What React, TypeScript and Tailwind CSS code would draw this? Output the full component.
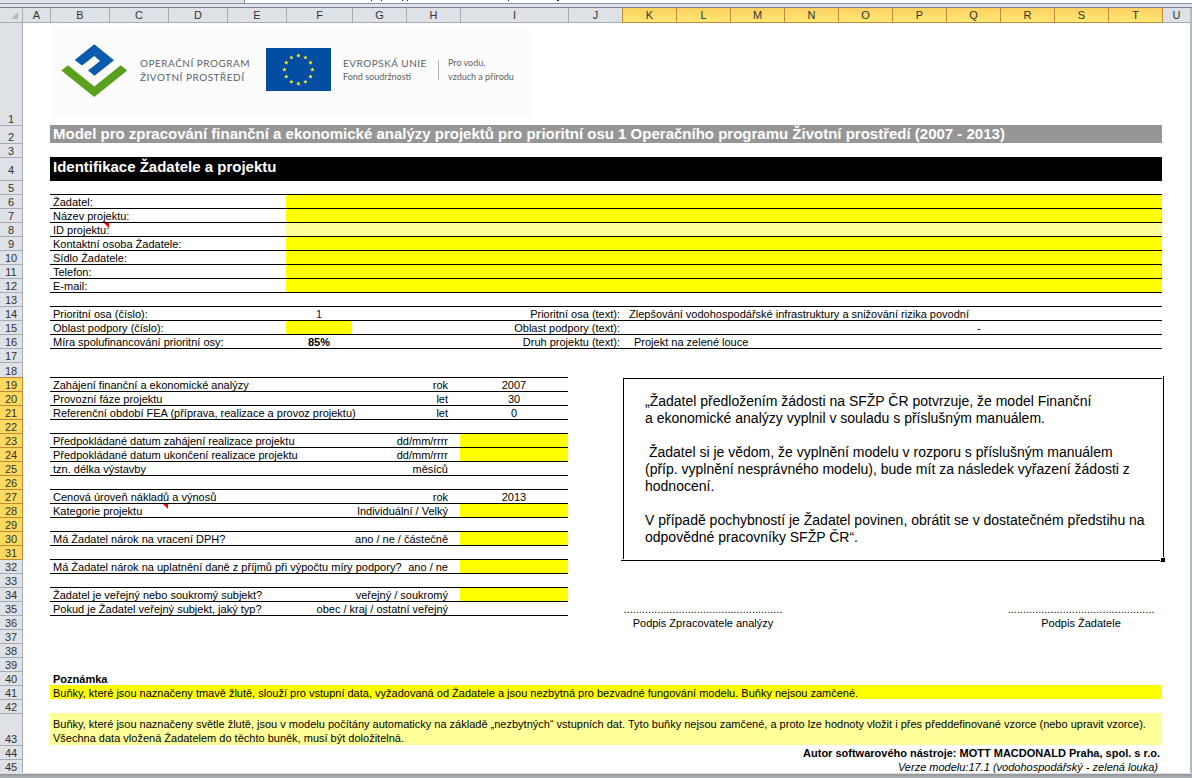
import type { ReactNode } from "react";

const COLUMN_WIDTHS = [
  "w-[23px]", "w-[27px]", "w-[59px]", "w-[59px]", "w-[59px]", "w-[59px]", "w-[66px]",
  "w-[54px]", "w-[54px]", "w-[108px]", "w-[54px]", "w-[54px]", "w-[54px]", "w-[54px]",
  "w-[54px]", "w-[54px]", "w-[54px]", "w-[54px]", "w-[54px]", "w-[54px]", "w-[54px]", "",
];
const LETTERS = "ABCDEFGHIJKLMNOPQRSTU".split("");

type CellProps = {
  span?: number;
  line?: boolean;
  flush?: boolean;
  className?: string;
  children?: ReactNode;
};

/* A worksheet cell; `line` draws the black rule along its top edge, `flush` drops the text inset. */
function Cell({ span = 1, line, flush, className = "", children }: CellProps) {
  return (
    <td
      colSpan={span}
      className={`relative px-0 pb-0 whitespace-nowrap ${flush ? "pt-0" : "pt-[2px]"} ${
        line ? "border-t border-black" : ""
      } ${className}`}
    >
      {children}
    </td>
  );
}

type RowProps = { n: number; height?: string; middle?: boolean; children?: ReactNode };

function Row({ n, height = "h-[14px]", middle, children }: RowProps) {
  const selected = n >= 19 && n <= 31;
  const colours = selected
    ? "bg-[#ffd95d] border-[#c08a3c]"
    : n === 32
      ? "bg-[#dee1e6] border-t-[#c08a3c] border-r-[#a5acb5]"
      : "bg-[#dee1e6] border-[#a5acb5]";
  return (
    <tr className={height}>
      <th
        scope="row"
        className={`border-r px-0 pt-[2px] pb-0 text-center font-normal text-[#333] ${
          middle ? "align-middle" : "align-bottom"
        } ${n > 1 ? "border-t" : ""} ${colours}`}
      >
        {n}
      </th>
      <td className="p-0" />
      {children}
    </tr>
  );
}

function Entry({ label, pale }: { label: string; pale?: boolean }) {
  return (
    <input
      type="text"
      aria-label={label}
      className={`block h-[13px] w-full outline-none ${pale ? "bg-[#ffff99]" : "bg-[#ffff00]"}`}
    />
  );
}

function CommentMark() {
  return (
    <svg className="h-[5px] w-[5px]" viewBox="0 0 5 5" aria-hidden="true">
      <path d="M0 0H5V5Z" fill="#f00" />
    </svg>
  );
}

const APPLICANT = [
  "Žadatel:",
  "Název projektu:",
  "ID projektu:",
  "Kontaktní osoba Žadatele:",
  "Sídlo Žadatele:",
  "Telefon:",
  "E-mail:",
];

type Param = { label?: string; unit?: string; value?: string; entry?: boolean; mark?: boolean };

const PARAMS: Param[] = [
  { label: "Zahájení finanční a ekonomické analýzy", unit: "rok", value: "2007" },
  { label: "Provozní fáze projektu", unit: "let", value: "30" },
  { label: "Referenční období FEA (příprava, realizace a provoz projektu)", unit: "let", value: "0" },
  {},
  { label: "Předpokládané datum zahájení realizace projektu", unit: "dd/mm/rrrr", entry: true },
  { label: "Předpokládané datum ukončení realizace projektu", unit: "dd/mm/rrrr", entry: true },
  { label: "tzn. délka výstavby", unit: "měsíců" },
  {},
  { label: "Cenová úroveň nákladů a výnosů", unit: "rok", value: "2013" },
  { label: "Kategorie projektu", unit: "Individuální / Velký", entry: true, mark: true },
  {},
  { label: "Má Žadatel nárok na vracení DPH?", unit: "ano / ne / částečně", entry: true },
  {},
  { label: "Má Žadatel nárok na uplatnění daně z příjmů při výpočtu míry podpory?", unit: "ano / ne", entry: true },
  {},
  { label: "Žadatel je veřejný nebo soukromý subjekt?", unit: "veřejný / soukromý", entry: true },
  { label: "Pokud je Žadatel veřejný subjekt, jaký typ?", unit: "obec / kraj / ostatní veřejný" },
];

const STATEMENT = [
  "„Žadatel předložením žádosti na SFŽP ČR potvrzuje, že model Finanční",
  "a ekonomické analýzy vyplnil v souladu s příslušným manuálem.",
  "",
  " Žadatel si je vědom, že vyplnění modelu v rozporu s příslušným manuálem",
  "(příp. vyplnění nesprávného modelu), bude mít za následek vyřazení žádosti z",
  "hodnocení.",
  "",
  "V případě pochybností je Žadatel povinen, obrátit se v dostatečném předstihu na",
  "odpovědné pracovníky SFŽP ČR“.",
].join("\n");

function ProgrammeMark() {
  return (
    <svg className="h-[54px] w-[68px]" viewBox="0 0 68 54" role="img" aria-label="Operační program Životní prostředí">
      <path d="M33.3 1.3 53 17.3 33.5 32.7 27 27.5 39 18 33.3 13 21 22.5 13.7 17Z" fill="#0a5bae" />
      <path d="M7 22.3 33.3 43.5 59.7 22.3 66.2 27.4 33.3 54 .3 27.4Z" fill="#5aa01e" />
    </svg>
  );
}

function star(cx: number, cy: number, r: number) {
  return Array.from({ length: 10 }, (_, i) => {
    const a = (Math.PI * i) / 5 - Math.PI / 2;
    const d = i % 2 ? r * 0.45 : r;
    return `${(cx + d * Math.cos(a)).toFixed(2)},${(cy + d * Math.sin(a)).toFixed(2)}`;
  }).join(" ");
}

function EuropeanFlag() {
  return (
    <svg className="h-[43px] w-[65px]" viewBox="0 0 65 43" role="img" aria-label="Evropská unie">
      <rect width="65" height="43" fill="#034ea2" />
      {Array.from({ length: 12 }, (_, i) => (
        <polygon
          key={i}
          points={star(32.4 + 14 * Math.sin((i * Math.PI) / 6), 21.6 - 14 * Math.cos((i * Math.PI) / 6), 2.3)}
          fill="#f6ec1e"
        />
      ))}
    </svg>
  );
}

function Banner() {
  return (
    <div className="mt-[6px] ml-px flex h-[87px] w-[480px] items-center bg-[#fcfcfc] pb-[6px] pl-[10px] font-[Lato,sans-serif] text-[#5c6166]">
      <ProgrammeMark />
      <p className="ml-[11px] w-[126px] text-[10px] leading-[14px] tracking-wider">
        OPERAČNÍ PROGRAM
        <br />
        ŽIVOTNÍ PROSTŘEDÍ
      </p>
      <EuropeanFlag />
      <div className="ml-3 w-[95px] leading-[14px]">
        <p className="text-[10px] tracking-wider">EVROPSKÁ UNIE</p>
        <p className="text-[9px]">Fond soudržnosti</p>
      </div>
      <div className="border-l border-[#b4b7ba] pl-[9px] text-[9px]">
        <p className="-my-1 leading-[14px]">
          Pro vodu,
          <br />
          vzduch a přírodu
        </p>
      </div>
    </div>
  );
}

function ParamCells({ item }: { item: Param }) {
  return (
    <>
      <Cell line span={5} className="pl-[3px]">
        {item.mark && (
          <span className="absolute top-0 left-[113px]">
            <CommentMark />
          </span>
        )}
        {item.label}
      </Cell>
      <Cell line span={2} className="pr-3">
        <div className="flex justify-end">{item.unit}</div>
      </Cell>
      <Cell line flush={item.entry} className="text-center">
        {item.entry ? <Entry label={item.label ?? ""} /> : item.value}
      </Cell>
      <Cell />
    </>
  );
}

export default function App() {
  return (
    <div className="w-full min-w-[1190px] overflow-hidden bg-white font-['Liberation_Sans',Arial,sans-serif] text-[11px] leading-[11px] text-black">
      <div className="flex h-[4px] overflow-hidden border-b border-[#8b9097] bg-white">
        <div className="w-[245px] border-r border-[#8b9097] bg-[#dee1e6]" />
        <svg className="ml-[125px] h-[2px] w-[190px]" viewBox="0 0 190 2" aria-hidden="true">
          <path d="M1 0h1v1h-1zM11 0h1v1h-1zM32 0h1v1h-1zM37 0h1v1h-1zM138 0h1v1h-1zM187 0h2v1h-2z" fill="#222" />
        </svg>
      </div>
      <div className="h-[4px] border-b border-[#7b828c] bg-[#dfe3ee]" />

      <table className="w-full table-fixed border-separate border-spacing-0 border-r-2 border-[#b5bac0]">
        <colgroup>
          {COLUMN_WIDTHS.map((w, i) => (
            <col key={i} className={w} />
          ))}
        </colgroup>
        <thead>
          <tr className="h-[15px]">
            <td className="border-r border-b border-[#a5acb5] bg-[#dee1e6] p-0">
              <svg className="ml-auto mr-[4px] h-[7px] w-[7px]" viewBox="0 0 7 7" aria-hidden="true">
                <path d="M7 0V7H0Z" fill="#b4b9c0" />
              </svg>
            </td>
            {LETTERS.map((letter, i) => {
              const selected = i >= 10 && i <= 19;
              return (
                <th
                  key={letter}
                  scope="col"
                  className={`border-b p-0 text-center font-normal text-[#333] ${i > 0 ? "border-l" : ""} ${
                    selected
                      ? "border-[#c08a3c] bg-linear-to-b from-[#fdd062] to-[#ffe873]"
                      : letter === "U"
                        ? "border-b-[#a5acb5] border-l-[#c08a3c] bg-[#dee1e6]"
                        : "border-[#a5acb5] bg-[#dee1e6]"
                  }`}
                >
                  {letter}
                </th>
              );
            })}
          </tr>
        </thead>
        <tbody>
          <Row n={1} height="h-[102px]">
            <Cell flush span={19} className="align-top">
              <Banner />
            </Cell>
          </Row>
          <Row n={2} height="h-[18px]">
            <Cell flush span={19} className="bg-[#969696] pl-[3px]">
              <h1 className="text-[15px] leading-[18px] font-bold text-white">
                Model pro zpracování finanční a ekonomické analýzy projektů pro prioritní osu 1 Operačního programu
                Životní prostředí (2007 - 2013)
              </h1>
            </Cell>
          </Row>
          <Row n={3} />
          <Row n={4} height="h-[23px]" middle>
            <Cell flush span={19} className="bg-black pl-[3px] align-top">
              <h2 className="text-[15px] leading-[20px] font-bold text-white">Identifikace Žadatele a projektu</h2>
            </Cell>
          </Row>
          <Row n={5}>
            <Cell line span={19} />
          </Row>
          {APPLICANT.map((label, i) => (
            <Row key={label} n={6 + i}>
              <Cell line span={4} className="pl-[3px]">
                {i === 2 && (
                  <span className="absolute top-0 left-[54px]">
                    <CommentMark />
                  </span>
                )}
                {label}
              </Cell>
              <Cell line flush span={15}>
                <Entry label={label} pale={i === 2} />
              </Cell>
            </Row>
          ))}
          <Row n={13}>
            <Cell line span={19} />
          </Row>
          <Row n={14}>
            <Cell line span={4} className="pl-[3px]">Prioritní osa (číslo):</Cell>
            <Cell line className="text-center text-[#4b0050]">1</Cell>
            <Cell line span={4} className="pr-[2px] text-right">Prioritní osa (text):</Cell>
            <Cell line span={10} className="pl-[7px]">
              Zlepšování vodohospodářské infrastruktury a snižování rizika povodní
            </Cell>
          </Row>
          <Row n={15}>
            <Cell line span={4} className="pl-[3px]">Oblast podpory (číslo):</Cell>
            <Cell line flush>
              <Entry label="Oblast podpory (číslo)" />
            </Cell>
            <Cell line span={4} className="pr-[2px] text-right">Oblast podpory (text):</Cell>
            <Cell line span={3} />
            <Cell line span={7} className="pl-3 text-center">-</Cell>
          </Row>
          <Row n={16}>
            <Cell line span={4} className="pl-[3px]">Míra spolufinancování prioritní osy:</Cell>
            <Cell line className="text-center font-bold">85%</Cell>
            <Cell line span={4} className="pr-[2px] text-right">Druh projektu (text):</Cell>
            <Cell line span={10} className="pl-3">Projekt na zelené louce</Cell>
          </Row>
          <Row n={17}>
            <Cell line span={19} />
          </Row>
          <Row n={18} height="h-[15px]" />
          {PARAMS.map((item, i) => {
            const n = 19 + i;
            return (
              <Row key={n} n={n}>
                <ParamCells item={item} />
                {n === 19 && (
                  <td colSpan={10} rowSpan={13} className="relative pt-4 pr-0 pb-0 pl-[23px] align-top">
                    <p className="text-[14px] leading-[17px] whitespace-pre">{STATEMENT}</p>
                    <span className="absolute top-px right-0 bottom-0 left-px border-t border-l border-black" />
                    <span className="absolute -top-px -right-[2px] -bottom-[2px] -left-px border-r border-b border-black" />
                    <span className="absolute -right-[3px] -bottom-[3px] h-[5px] w-[5px] border border-black border-t-white border-l-white bg-black" />
                  </td>
                )}
                {n === 35 && (
                  <>
                    <Cell span={3} className="text-center">{".".repeat(52)}</Cell>
                    <Cell span={4} />
                    <Cell span={3} className="text-center">{".".repeat(48)}</Cell>
                  </>
                )}
              </Row>
            );
          })}
          <Row n={36}>
            <Cell line span={8} />
            <Cell />
            <Cell span={3} className="text-center">Podpis Zpracovatele analýzy</Cell>
            <Cell span={4} />
            <Cell span={3} className="text-center">Podpis Žadatele</Cell>
          </Row>
          <Row n={37} />
          <Row n={38} />
          <Row n={39} />
          <Row n={40}>
            <Cell span={19} className="pl-[3px] font-bold">Poznámka</Cell>
          </Row>
          <Row n={41}>
            <Cell span={19} className="bg-[#ffff00] pl-[3px]">
              Buňky, které jsou naznačeny tmavě žlutě, slouží pro vstupní data, vyžadovaná od Žadatele a jsou nezbytná
              pro bezvadné fungování modelu. Buňky nejsou zamčené.
            </Cell>
          </Row>
          <Row n={42} />
          <Row n={43} height="h-[32px]">
            <Cell span={19} className="bg-[#ffff99] pl-[3px] align-bottom leading-[14px]">
              Buňky, které jsou naznačeny světle žlutě, jsou v modelu počítány automaticky na základě „nezbytných“
              vstupních dat. Tyto buňky nejsou zamčené, a proto lze hodnoty vložit i přes předdefinované vzorce (nebo
              upravit vzorce).
              <br />
              Všechna data vložená Žadatelem do těchto buněk, musí být doložitelná.
            </Cell>
          </Row>
          <Row n={44}>
            <Cell span={19} className="pr-[2px] text-right font-bold">
              Autor softwarového nástroje: MOTT MACDONALD Praha, spol. s r.o.
            </Cell>
          </Row>
          <Row n={45}>
            <Cell span={19} className="pr-1 text-right italic">
              Verze modelu:17.1 (vodohospodářský - zelená louka)
            </Cell>
          </Row>
        </tbody>
      </table>
      <div className="h-[5px] border-t border-[#dcdee0] bg-linear-to-b from-[#8f9398] to-[#b4b8bc]" />
    </div>
  );
}
